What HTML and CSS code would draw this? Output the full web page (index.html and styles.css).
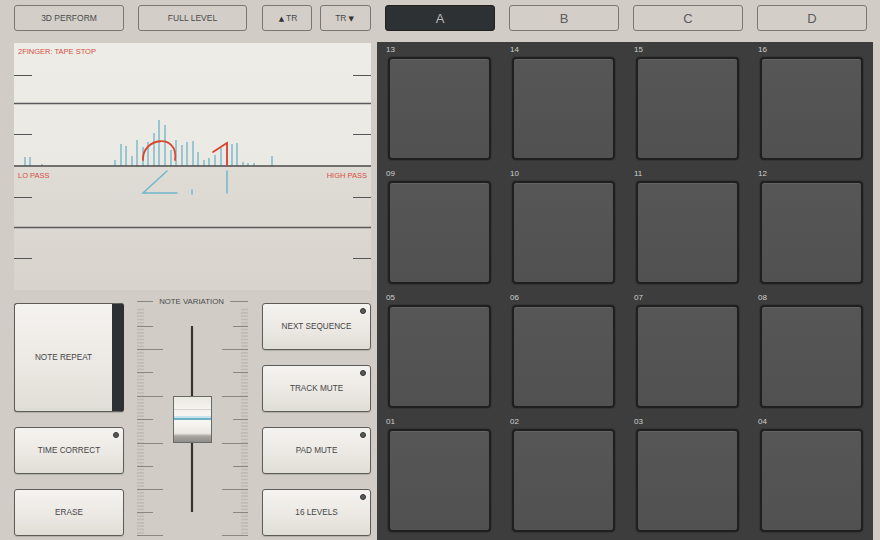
FILE: index.html
```html
<!DOCTYPE html>
<html lang="en">
<head>
    <meta charset="UTF-8">
    <title>Pad Perform</title>
    <link rel="stylesheet" href="styles.css">
</head>
<body>
    <div class="screen">
        <div class="left">
            <div class="toolbar">
                <button class="tool w-perform">3D PERFORM</button>
                <button class="tool w-full">FULL LEVEL</button>
                <button class="tool w-up"><span class="tri">&#9650;</span>TR</button>
                <button class="tool w-down">TR<span class="tri">&#9660;</span></button>
            </div>

            <div class="scope">
                <svg class="scope-draw" width="357" height="247" viewBox="0 0 357 247">
                    <!-- grid -->
                    <g stroke="#555" stroke-width="1">
                        <line x1="0" y1="32.5" x2="18" y2="32.5"/>
                        <line x1="339" y1="32.5" x2="357" y2="32.5"/>
                        <line x1="0" y1="91.5" x2="18" y2="91.5"/>
                        <line x1="339" y1="91.5" x2="357" y2="91.5"/>
                        <line x1="0" y1="154.5" x2="18" y2="154.5"/>
                        <line x1="339" y1="154.5" x2="357" y2="154.5"/>
                        <line x1="0" y1="215.5" x2="18" y2="215.5"/>
                        <line x1="339" y1="215.5" x2="357" y2="215.5"/>
                    </g>
                    <g stroke="#5a5a5a" stroke-width="1.4">
                        <line x1="0" y1="60.5" x2="357" y2="60.5"/>
                        <line x1="0" y1="184.5" x2="357" y2="184.5"/>
                    </g>
                    <!-- spectrum -->
                    <g stroke="#7fbacd" stroke-width="1.5">
                        <line x1="11" y1="114" x2="11" y2="123"/>
                        <line x1="16" y1="114" x2="16" y2="123"/>
                        <line x1="28" y1="121" x2="28" y2="123"/>
                        <line x1="101" y1="117" x2="101" y2="123"/>
                        <line x1="107" y1="101" x2="107" y2="123"/>
                        <line x1="112" y1="103" x2="112" y2="123"/>
                        <line x1="118" y1="113" x2="118" y2="123"/>
                        <line x1="123" y1="97" x2="123" y2="123"/>
                        <line x1="129" y1="104" x2="129" y2="123"/>
                        <line x1="134" y1="99" x2="134" y2="123"/>
                        <line x1="140" y1="90" x2="140" y2="123"/>
                        <line x1="145" y1="77" x2="145" y2="123"/>
                        <line x1="151" y1="82" x2="151" y2="123"/>
                        <line x1="157" y1="107" x2="157" y2="123"/>
                        <line x1="162" y1="97" x2="162" y2="123"/>
                        <line x1="168" y1="102" x2="168" y2="123"/>
                        <line x1="173" y1="99" x2="173" y2="123"/>
                        <line x1="179" y1="98" x2="179" y2="123"/>
                        <line x1="184" y1="109" x2="184" y2="123"/>
                        <line x1="190" y1="117" x2="190" y2="123"/>
                        <line x1="195" y1="115" x2="195" y2="123"/>
                        <line x1="201" y1="112" x2="201" y2="123"/>
                        <line x1="207" y1="105" x2="207" y2="123"/>
                        <line x1="213" y1="100" x2="213" y2="123"/>
                        <line x1="218" y1="101" x2="218" y2="123"/>
                        <line x1="223" y1="100" x2="223" y2="123"/>
                        <line x1="229" y1="119" x2="229" y2="123"/>
                        <line x1="234" y1="120" x2="234" y2="123"/>
                        <line x1="240" y1="120" x2="240" y2="123"/>
                        <line x1="258" y1="113" x2="258" y2="123"/>
                    </g>
                    <line x1="0" y1="123" x2="357" y2="123" stroke="#4a4a4a" stroke-width="1.4"/>
                    <!-- finger traces -->
                    <g fill="none" stroke="#d9472f" stroke-width="1.8" stroke-linecap="round">
                        <path d="M129 117 C128 94, 165 90, 161 117"/>
                        <path d="M199 109 L213 100 L213 122"/>
                    </g>
                    <g fill="none" stroke="#72b7cc" stroke-width="1.5" stroke-linecap="round">
                        <path d="M153 128 L129 150 L163 150"/>
                        <line x1="178" y1="147" x2="178" y2="151"/>
                        <line x1="213" y1="128" x2="213" y2="150"/>
                    </g>
                </svg>
                <span class="scope-text tl">2FINGER: TAPE STOP</span>
                <span class="scope-text ml">LO PASS</span>
                <span class="scope-text mr">HIGH PASS</span>
            </div>

            <div class="controls">
                <div class="col">
                    <button class="key repeat"><span>NOTE REPEAT</span></button>
                    <button class="key led">TIME CORRECT</button>
                    <button class="key">ERASE</button>
                </div>

                <div class="variation">
                    <div class="var-title">
                        <span class="rule"></span>
                        <span>NOTE VARIATION</span>
                        <span class="rule"></span>
                    </div>
                    <svg width="138" height="229" viewBox="0 0 138 229">
                        <defs>
                            <pattern id="ticks" width="8" height="3.333" patternUnits="userSpaceOnUse" y="0">
                                <line x1="0" y1="2.5" x2="8" y2="2.5" stroke="#b3afa9" stroke-width="1"/>
                            </pattern>
                            <linearGradient id="cap" x1="0" y1="0" x2="0" y2="1">
                                <stop offset="0" stop-color="#ebe8e2"/>
                                <stop offset="0.25" stop-color="#f4f2ee"/>
                                <stop offset="0.55" stop-color="#f7f6f2"/>
                                <stop offset="0.8" stop-color="#ebe8e2"/>
                                <stop offset="0.86" stop-color="#a9a6a1"/>
                                <stop offset="1" stop-color="#8f8c87"/>
                            </linearGradient>
                        </defs>
                        <rect x="13" y="0" width="7" height="229" fill="url(#ticks)"/>
                        <rect x="117" y="0" width="7" height="229" fill="url(#ticks)"/>
                        <g stroke="#8a8680" stroke-width="1">
                            <line x1="13" y1="19.5" x2="29" y2="19.5"/>
                            <line x1="109" y1="19.5" x2="124" y2="19.5"/>
                            <line x1="13" y1="42.5" x2="39" y2="42.5"/>
                            <line x1="98" y1="42.5" x2="124" y2="42.5"/>
                            <line x1="13" y1="65.5" x2="29" y2="65.5"/>
                            <line x1="109" y1="65.5" x2="124" y2="65.5"/>
                            <line x1="13" y1="89.5" x2="39" y2="89.5"/>
                            <line x1="98" y1="89.5" x2="124" y2="89.5"/>
                            <line x1="13" y1="112.5" x2="29" y2="112.5"/>
                            <line x1="109" y1="112.5" x2="124" y2="112.5"/>
                            <line x1="13" y1="136.5" x2="39" y2="136.5"/>
                            <line x1="98" y1="136.5" x2="124" y2="136.5"/>
                            <line x1="13" y1="159.5" x2="29" y2="159.5"/>
                            <line x1="109" y1="159.5" x2="124" y2="159.5"/>
                            <line x1="13" y1="182.5" x2="39" y2="182.5"/>
                            <line x1="98" y1="182.5" x2="124" y2="182.5"/>
                            <line x1="13" y1="205.5" x2="29" y2="205.5"/>
                            <line x1="109" y1="205.5" x2="124" y2="205.5"/>
                            <line x1="13" y1="228.5" x2="39" y2="228.5"/>
                            <line x1="98" y1="228.5" x2="124" y2="228.5"/>
                        </g>
                        <line x1="68" y1="19" x2="68" y2="205" stroke="#353535" stroke-width="2.2"/>
                        <rect x="49.5" y="89.5" width="38" height="46" fill="url(#cap)" stroke="#6c6a66"/>
                        <line x1="50" y1="102.5" x2="87" y2="102.5" stroke="#d9d6d0"/>
                        <line x1="50" y1="110" x2="87" y2="110" stroke="#b9dde8" stroke-width="1.5"/>
                        <line x1="50" y1="112" x2="87" y2="112" stroke="#6cb3c9" stroke-width="1.8"/>
                    </svg>
                </div>

                <div class="col">
                    <button class="key led">NEXT SEQUENCE</button>
                    <button class="key led">TRACK MUTE</button>
                    <button class="key led">PAD MUTE</button>
                    <button class="key led">16 LEVELS</button>
                </div>
            </div>
        </div>

        <div class="right">
            <div class="banks">
                <button class="bank active">A</button>
                <button class="bank">B</button>
                <button class="bank">C</button>
                <button class="bank">D</button>
            </div>

            <div class="pads">
                <div class="cell"><span class="num">13</span><div class="pad"></div></div>
                <div class="cell"><span class="num">14</span><div class="pad"></div></div>
                <div class="cell"><span class="num">15</span><div class="pad"></div></div>
                <div class="cell"><span class="num">16</span><div class="pad"></div></div>
                <div class="cell"><span class="num">09</span><div class="pad"></div></div>
                <div class="cell"><span class="num">10</span><div class="pad"></div></div>
                <div class="cell"><span class="num">11</span><div class="pad"></div></div>
                <div class="cell"><span class="num">12</span><div class="pad"></div></div>
                <div class="cell"><span class="num">05</span><div class="pad"></div></div>
                <div class="cell"><span class="num">06</span><div class="pad"></div></div>
                <div class="cell"><span class="num">07</span><div class="pad"></div></div>
                <div class="cell"><span class="num">08</span><div class="pad"></div></div>
                <div class="cell"><span class="num">01</span><div class="pad"></div></div>
                <div class="cell"><span class="num">02</span><div class="pad"></div></div>
                <div class="cell"><span class="num">03</span><div class="pad"></div></div>
                <div class="cell"><span class="num">04</span><div class="pad"></div></div>
            </div>
        </div>
    </div>
</body>
</html>
```

FILE: styles.css
```css
body {
    margin: 0;
    background-color: #d1cdc6;
    font-family: "Liberation Sans", Arial, sans-serif;
    color: #444;
    overflow: hidden;
}
button {
    font-family: inherit;
    margin: 0;
    padding: 0;
    cursor: pointer;
}
.screen {
    display: flex;
    height: 540px;
    padding-left: 14px;
}

/* left side */
.left {
    width: 357px;
    display: flex;
    flex-direction: column;
}
.toolbar {
    display: flex;
    height: 26px;
    margin-top: 5px;
}
.tool {
    height: 26px;
    background: #d3cfc8;
    border: 1px solid #797773;
    border-radius: 3px;
    font-size: 8.5px;
    color: #4a4a4a;
}
.w-perform { width: 110px; }
.w-full { width: 109px; margin-left: 14px; }
.w-up { width: 50px; margin-left: 15px; }
.w-down { width: 51px; margin-left: 8px; }
.tri {
    font-family: "DejaVu Sans", sans-serif;
    font-size: 7px;
    margin: 0 2px;
    color: #333;
}

.scope {
    position: relative;
    height: 247px;
    margin-top: 12px;
    background: linear-gradient(#eeece7 0, #ebe9e4 123px, #dfdbd5 124px, #d8d4cd 247px);
}
.scope-draw {
    display: block;
}
.scope-text {
    position: absolute;
    font-size: 7.5px;
    color: #d8503f;
}
.tl { left: 4px; top: 4px; }
.ml { left: 4px; top: 128px; }
.mr { right: 4px; top: 128px; }

.controls {
    display: flex;
    margin-top: 13px;
    height: 233px;
}
.col {
    display: flex;
    flex-direction: column;
    gap: 15px;
}
.col:first-child { width: 110px; }
.col:last-child { width: 109px; }
.key {
    position: relative;
    height: 47px;
    flex: none;
    background: linear-gradient(#f5f3ef, #ebe8e3 60%, #e0ddd6);
    border: 1px solid #5e5c58;
    border-radius: 3px;
    box-shadow: 0 1px 1px rgba(0, 0, 0, 0.15);
    font-size: 8.2px;
    color: #454545;
}
.key.led::after {
    content: "";
    position: absolute;
    top: 4px;
    right: 4px;
    width: 4px;
    height: 4px;
    border-radius: 50%;
    background: #5a5a5a;
    border: 1px solid #333;
}
.repeat {
    height: 109px;
    display: flex;
    padding: 0;
    overflow: hidden;
    border-right: 12px solid #2d3133;
}
.repeat span {
    margin: auto;
}

.variation {
    width: 138px;
    margin-top: -8px;
    display: flex;
    flex-direction: column;
}
.var-title {
    height: 12px;
    display: flex;
    align-items: center;
    justify-content: space-between;
    padding: 0 14px 0 13px;
    font-size: 7.8px;
    color: #4a4a4a;
}
.rule {
    width: 16px;
    height: 1px;
    background: #8a8680;
}
.var-title .rule:last-child { width: 18px; }
.variation svg {
    display: block;
}

/* right side */
.right {
    width: 496px;
    margin-left: 6px;
    display: flex;
    flex-direction: column;
}
.banks {
    display: flex;
    gap: 14px;
    height: 26px;
    margin-top: 5px;
    padding-left: 8px;
}
.bank {
    width: 110px;
    height: 26px;
    background: #d3cfc8;
    border: 1px solid #7a7874;
    border-radius: 3px;
    font-size: 13px;
    color: #5c5c5c;
}
.bank.active {
    background: #2e3133;
    border-color: #222;
    color: #b8b8b8;
}
.pads {
    flex: 1;
    margin-top: 11px;
    padding: 1px 11px 0;
    background: #3d3d3d;
    display: grid;
    grid-template-columns: repeat(4, 103px);
    grid-auto-rows: 117px;
    column-gap: 21px;
    row-gap: 7px;
}
.cell {
    display: flex;
    flex-direction: column;
}
.num {
    height: 14px;
    line-height: 14px;
    margin-left: -2px;
    font-size: 8px;
    color: #cfcfcf;
}
.pad {
    height: 103px;
    box-sizing: border-box;
    background: linear-gradient(#565656, #515151);
    border: 2px solid #1f1f1f;
    border-radius: 4px;
    box-shadow: inset 0 1px 0 rgba(255, 255, 255, 0.08), 0 0 0 1px #353535;
}
```
